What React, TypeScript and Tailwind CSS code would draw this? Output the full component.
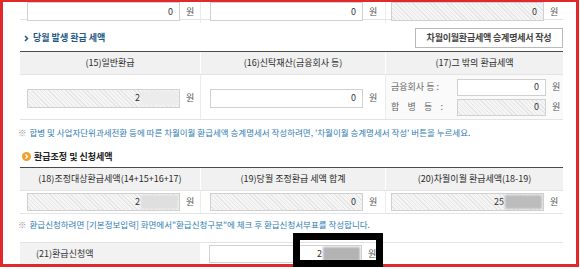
import React from 'react';

const HATCH =
  'bg-[repeating-linear-gradient(45deg,#f5f5f5_0px,#f5f5f5_2px,#e6e6e6_2px,#e6e6e6_3px)]';

type BoxProps = {
  value: string;
  readOnly?: boolean;
  width?: string;
  height?: string;
  mask?: string;
};

// input-like amount box with trailing 원
const AmountBox: React.FC<BoxProps> = ({ value, readOnly, width = 'w-[153px]', height = 'h-[19px]', mask }) => (
  <div className="flex items-center gap-[6px]">
    <div
      className={`flex items-center justify-end border border-[#d0d0d0] text-[9px] text-[#333] ${width} ${height} ${
        readOnly ? HATCH : 'bg-white'
      } ${mask ? 'pr-[1px]' : 'pr-[6px]'}`}
    >
      <span>{value}</span>
      {mask && <span className={`ml-[1px] h-[14px] w-[37px] blur-[1px] ${mask}`} />}
    </div>
    <span className="text-[9px] text-[#555]">원</span>
  </div>
);

const Note: React.FC<{ children: React.ReactNode }> = ({ children }) => (
  <div className="-ml-[2px] flex items-center gap-[3px] text-[8.5px] leading-[10px] text-[#2f7db3]">
    <span className="text-[#999]">※</span>
    <span>{children}</span>
  </div>
);

export default function App() {
  return (
    <div
      className="relative h-[269px] w-[580px] overflow-hidden bg-white"
      style={{ fontFamily: '"Noto Sans CJK KR", "Noto Sans", sans-serif' }}
    >
      <div className="h-[267px] w-[579px] overflow-hidden border-[3px] border-t-2 border-[#e3282c] pl-[17px] pr-[13px]">
        {/* row carried over from above */}
        <div className="grid h-[18px] grid-cols-[180px_185px_178px] border-b border-[#e3e3e3]">
          <div className="flex items-end pb-[2px] pl-[7px]">
            <AmountBox value="0" />
          </div>
          <div className="flex items-end border-l border-[#ececec] pb-[2px] pl-[9px]">
            <AmountBox value="0" />
          </div>
          <div className="flex items-end border-l border-[#ececec] pb-[2px] pl-[5px]">
            <AmountBox value="0" readOnly width="w-[153px]" />
          </div>
        </div>

        {/* 당월 발생 환급 세액 */}
        <div className="flex h-[31px] items-center justify-between pt-[5px]">
          <div className="flex items-center gap-[4px] pl-[4px] text-[9px] font-bold text-[#1f5a86]">
            <svg width="5" height="7" viewBox="0 0 5 7">
              <path d="M1 1 L3.5 3.5 L1 6" fill="none" stroke="#1f5a86" strokeWidth="1.5" />
            </svg>
            <span>당월 발생 환급 세액</span>
          </div>
          <button className="flex h-[20px] w-[148px] items-center justify-center border border-[#b9b9b9] bg-white text-[9px] font-bold tracking-[-0.2px] text-[#444]">
            차월이월환급세액 승계명세서 작성
          </button>
        </div>

        <div className="border-t border-[#4a4a4a]">
          <div className="grid h-[22px] grid-cols-[180px_185px_178px] bg-[#f1f1f1] text-[9px] text-[#2a2a2a]">
            <div className="flex items-center justify-center">(15)일반환급</div>
            <div className="flex items-center justify-center border-l border-white">(16)신탁재산(금융회사 등)</div>
            <div className="flex items-center justify-center border-l border-white">(17)그 밖의 환급세액</div>
          </div>
          <div className="grid h-[46px] grid-cols-[180px_185px_178px] border-y border-[#e3e3e3]">
            <div className="flex items-center pl-[7px] pt-[2px]">
              <AmountBox value="2" readOnly mask="bg-[#ececec]" />
            </div>
            <div className="flex items-center border-l border-[#ececec] pl-[9px] pt-[2px]">
              <AmountBox value="0" />
            </div>
            <div className="flex flex-col justify-center gap-[3px] border-l border-[#ececec] bg-[#fafafa] pl-[5px]">
              <div className="flex items-center">
                <span className="w-[66px] text-[9px] text-[#666]">금융회사 등 :</span>
                <AmountBox value="0" width="w-[89px]" height="h-[17px]" />
              </div>
              <div className="flex items-center">
                <span className="flex w-[52px] justify-between text-[9px] text-[#666]">
                  <span>합</span>
                  <span>병</span>
                  <span>등</span>
                  <span>:</span>
                </span>
                <span className="w-[14px]" />
                <AmountBox value="0" readOnly width="w-[89px]" height="h-[17px]" />
              </div>
            </div>
          </div>
        </div>

        <div className="flex h-[23px] items-center">
          <Note>
            합병 및 사업자단위과세전환 등에 따른 차월이월 환급세액 승계명세서 작성하려면, '차월이월 승계명세서 작성' 버튼을 누르세요.
          </Note>
        </div>

        {/* 환급조정 및 신청세액 */}
        <div className="flex h-[24px] items-center gap-[3px] pl-[2px] pt-[3px] text-[9px] font-bold text-[#222]">
          <svg width="9" height="9" viewBox="0 0 9 9">
            <circle cx="4.5" cy="4.5" r="4.5" fill="#f0a12e" />
            <path d="M3.5 2.5 L5.5 4.5 L3.5 6.5" fill="none" stroke="#fff" strokeWidth="1.3" />
          </svg>
          <span>환급조정 및 신청세액</span>
        </div>

        <div className="border-t border-[#4a4a4a]">
          <div className="grid h-[22px] grid-cols-[180px_185px_178px] bg-[#f1f1f1] text-[9px] text-[#2a2a2a]">
            <div className="flex items-center justify-center">(18)조정대상환급세액(14+15+16+17)</div>
            <div className="flex items-center justify-center border-l border-white">(19)당월 조정환급 세액 합계</div>
            <div className="flex items-center justify-center border-l border-white">(20)차월이월 환급세액(18-19)</div>
          </div>
          <div className="grid h-[24px] grid-cols-[180px_185px_178px] border-y border-[#e3e3e3]">
            <div className="flex items-center pl-[7px]">
              <AmountBox value="2" readOnly height="h-[18px]" mask="bg-[#dedede]" />
            </div>
            <div className="flex items-center border-l border-[#ececec] pl-[9px]">
              <AmountBox value="0" readOnly height="h-[18px]" />
            </div>
            <div className="flex items-center border-l border-[#ececec] pl-[5px]">
              <AmountBox value="25" readOnly height="h-[18px]" mask="bg-[#bcbcbc]" />
            </div>
          </div>
        </div>

        <div className="h-[28px] pt-[5px]">
          <Note>환급신청하려면 [기본정보입력] 화면에서"환급신청구분"에 체크 후 환급신청서부표를 작성합니다.</Note>
        </div>

        <div className="grid h-[23px] grid-cols-[180px_363px] border-y border-[#e3e3e3]">
          <div className="flex items-center bg-[#f2f2f2] pl-[16px] text-[9px] text-[#333]">(21)환급신청액</div>
          <div className="flex items-center pl-[9px]">
            <AmountBox value="2" height="h-[18px]" mask="bg-[#b3b3b3]" />
          </div>
        </div>
      </div>

      {/* annotation box */}
      <div className="absolute left-[293px] top-[233px] h-[34px] w-[90px] border-[7px] border-black" />
    </div>
  );
}
